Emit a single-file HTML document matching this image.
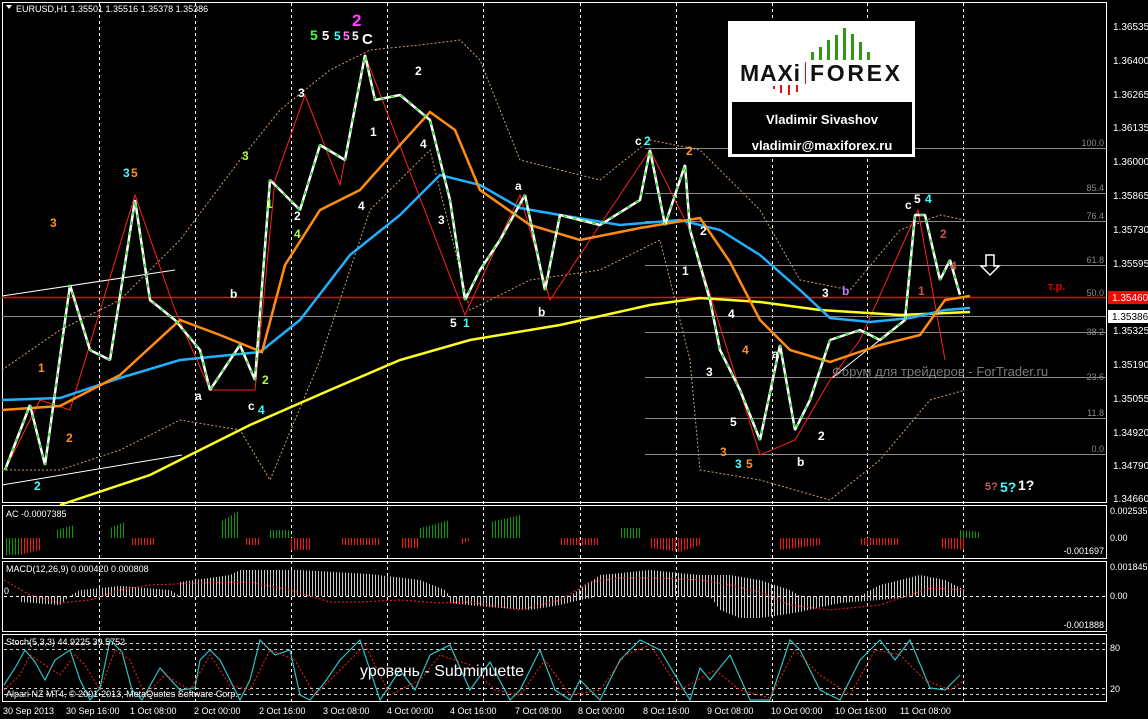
<!DOCTYPE html>
<html><head><meta charset="utf-8"><style>
html,body{margin:0;padding:0;background:#000;width:1148px;height:719px;overflow:hidden}
svg{display:block;font-family:"Liberation Sans",sans-serif}
</style></head><body>
<svg width="1148" height="719" viewBox="0 0 1148 719" xmlns="http://www.w3.org/2000/svg">
<defs>
<pattern id="vb" width="3" height="4" patternUnits="userSpaceOnUse"><rect x="0" y="0" width="1" height="4" fill="#c8c8c8"/></pattern>
<pattern id="vg" width="3" height="4" patternUnits="userSpaceOnUse"><rect x="0" y="0" width="1" height="4" fill="#00a000"/></pattern>
<pattern id="vr" width="3" height="4" patternUnits="userSpaceOnUse"><rect x="0" y="0" width="1" height="4" fill="#ff1010"/></pattern>
</defs>
<rect width="1148" height="719" fill="#000"/>
<g fill="none" stroke="#fff" stroke-width="1">
<rect x="2.5" y="2.5" width="1104" height="500"/>
<rect x="2.5" y="505.5" width="1104" height="53"/>
<rect x="2.5" y="561.5" width="1104" height="70"/>
<rect x="2.5" y="634.5" width="1104" height="67"/>
</g>
<g stroke="#fff" stroke-dasharray="3,3" stroke-width="1">
<path d="M99.5 3V701M195.5 3V701M291.5 3V701M387.5 3V701M483.5 3V701M580.5 3V701M676.5 3V701M772.5 3V701M867.5 3V701M963.5 3V701"/>
</g>
<g stroke="#8a8a8a" stroke-width="1">
<path d="M645 148.5H1106M645 193.5H1106M645 221.5H1106M645 265.5H1106M645 332.5H1106M645 377.5H1106M645 418.5H1106M645 454.5H1106"/>
<path d="M2 316.5H1106"/>
</g>
<g fill="#8a8a8a" font-size="9" text-anchor="end">
<text x="1104" y="146">100.0</text><text x="1104" y="191">85.4</text><text x="1104" y="219">76.4</text><text x="1104" y="263">61.8</text><text x="1104" y="296">50.0</text><text x="1104" y="335">38.2</text><text x="1104" y="380">23.6</text><text x="1104" y="416">11.8</text><text x="1104" y="452">0.0</text>
</g>
<path d="M2 297.5H1106" stroke="#ff0000" stroke-width="1.5"/>
<text x="1048" y="290" fill="#e00000" font-size="11" font-weight="bold">т.р.</text>
<g fill="none" stroke="#c8a070" stroke-width="1" stroke-dasharray="2,2">
<path d="M2 370 L60 330 L120 300 L180 240 L240 160 L280 110 L330 70 L370 50 L420 45 L460 40 L480 60 L520 160 L600 180 L650 140 L700 150 L760 210 L800 280 L850 290 L900 230 L940 215 L965 220"/>
<path d="M2 470 L60 470 L120 450 L180 420 L240 430 L270 480 L320 360 L370 210 L430 150 L470 310 L530 280 L600 270 L660 240 L690 360 L700 470 L760 480 L830 500 L880 460 L930 400 L965 390"/>
</g>
<g stroke="#fff" stroke-width="1">
<path d="M2 296 L175 270M2 485 L182 455M832 378 L905 320"/>
</g>
<g fill="none" stroke="#ff2020" stroke-width="1">
<path d="M5 470 L40 400 L70 410 L135 195 L175 310 L210 390 L255 390 L275 180 L305 95 L340 185 L365 55 L465 315 L520 195 L550 300 L650 150 L690 230 L760 455 L795 440 L830 380 L860 340 L918 210 L945 360"/>
</g>
<g fill="none" stroke-width="2.5">
<path stroke="#ffff20" d="M60 505 L150 475 L250 425 L330 390 L400 360 L470 340 L560 325 L650 305 L700 298 L760 302 L820 310 L900 315 L970 312"/>
<path stroke="#20b0ff" d="M2 400 L60 398 L120 378 L180 360 L260 352 L300 320 L350 255 L400 215 L440 175 L480 185 L520 208 L560 215 L620 225 L680 220 L720 230 L760 255 L800 290 L830 318 L870 322 L910 318 L945 310 L970 308"/>
<path stroke="#ff8c10" d="M2 410 L60 406 L120 375 L180 320 L220 335 L262 352 L285 265 L320 210 L360 190 L400 145 L430 112 L455 130 L480 190 L530 225 L580 240 L640 228 L700 218 L730 262 L760 320 L790 350 L830 362 L880 345 L920 335 L945 300 L970 296"/>
</g>
<g fill="none" stroke-linejoin="bevel">
<path stroke="#fff" stroke-width="2.5" d="M5 470 L30 405 L45 465 L70 285 L90 350 L110 360 L135 200 L150 300 L175 320 L200 350 L210 390 L240 345 L255 380 L270 180 L300 210 L320 145 L345 160 L365 55 L375 100 L400 95 L430 120 L450 200 L465 300 L480 270 L500 240 L525 195 L545 290 L560 215 L600 225 L640 200 L650 150 L665 225 L685 165 L690 230 L710 300 L720 350 L740 390 L760 440 L780 345 L795 430 L810 400 L830 340 L860 330 L880 340 L905 320 L915 215 L925 215 L940 280 L950 260 L960 295"/>
<path stroke="#20e020" stroke-width="1.5" stroke-dasharray="4,6" d="M5 470 L30 405 L45 465 L70 285 L90 350 L110 360 L135 200 L150 300 L175 320 L200 350 L210 390 L240 345 L255 380 L270 180 L300 210 L320 145 L345 160 L365 55 L375 100 L400 95 L430 120 L450 200 L465 300 L480 270 L500 240 L525 195 L545 290 L560 215 L600 225 L640 200 L650 150 L665 225 L685 165 L690 230 L710 300 L720 350 L740 390 L760 440 L780 345 L795 430 L810 400 L830 340 L860 330 L880 340 L905 320 L915 215 L925 215 L940 280 L950 260 L960 295"/>
</g>
<g font-size="12" font-weight="bold">
<text x="310" y="40" fill="#40ff40" font-size="14">5</text><text x="322" y="40" fill="#fff" font-size="13">5</text><text x="334" y="40" fill="#40ffff">5</text><text x="343" y="40" fill="#ff80ff">5</text><text x="352" y="40" fill="#fff">5</text><text x="362" y="44" fill="#fff" font-size="15">C</text>
<text x="352" y="26" fill="#ff40ff" font-size="17">2</text>
<text x="123" y="177" fill="#40ffff">3</text><text x="131" y="177" fill="#ff9020">5</text>
<text x="50" y="227" fill="#ff9020">3</text><text x="242" y="160" fill="#aaff40">3</text>
<text x="298" y="97" fill="#fff">3</text><text x="415" y="75" fill="#fff">2</text>
<text x="635" y="145" fill="#fff">c</text><text x="644" y="145" fill="#40ffff">2</text>
<text x="686" y="155" fill="#ff9020">2</text><text x="515" y="190" fill="#fff">a</text>
<text x="450" y="327" fill="#fff">5</text><text x="463" y="327" fill="#40ffff">1</text>
<text x="538" y="316" fill="#fff">b</text><text x="230" y="298" fill="#fff">b</text>
<text x="248" y="410" fill="#fff">c</text><text x="258" y="414" fill="#40ffff">4</text>
<text x="195" y="400" fill="#fff">a</text>
<text x="905" y="209" fill="#fff">c</text><text x="914" y="203" fill="#fff">5</text><text x="925" y="203" fill="#40ffff">4</text>
<text x="940" y="238" fill="#d05050">2</text><text x="950" y="270" fill="#d05050">4</text><text x="918" y="295" fill="#d05050">1</text>
<text x="735" y="468" fill="#40ffff">3</text><text x="746" y="468" fill="#ff9020">5</text><text x="797" y="466" fill="#fff">b</text>
<text x="742" y="354" fill="#ff9020">4</text><text x="772" y="358" fill="#fff">a</text><text x="822" y="297" fill="#fff">3</text><text x="842" y="295" fill="#c080ff">b</text>
<text x="720" y="456" fill="#ff9020">3</text><text x="730" y="426" fill="#fff">5</text><text x="818" y="440" fill="#fff">2</text>
<text x="706" y="376" fill="#fff">3</text><text x="728" y="318" fill="#fff">4</text><text x="700" y="235" fill="#fff">2</text><text x="682" y="275" fill="#fff">1</text>
<text x="985" y="490" fill="#c06060" font-size="11">5?</text><text x="1000" y="492" fill="#40ffff" font-size="14">5?</text><text x="1018" y="490" fill="#fff" font-size="14">1?</text>
<text x="266" y="208" fill="#aaff40">1</text><text x="294" y="220" fill="#fff">2</text><text x="294" y="238" fill="#aaff40">4</text><text x="370" y="136" fill="#fff">1</text><text x="420" y="148" fill="#fff">4</text><text x="438" y="224" fill="#fff">3</text><text x="358" y="210" fill="#fff">4</text>
<text x="38" y="372" fill="#ff9020">1</text><text x="66" y="442" fill="#ff9020">2</text><text x="34" y="490" fill="#40ffff">2</text><text x="262" y="384" fill="#aaff40">2</text>
</g>
<text x="832" y="376" fill="#9a9a9a" font-size="13" opacity="0.8">Форум для трейдеров - ForTrader.ru</text>
<path d="M986 255 H994 V266 H999 L990 275 L981 266 H986 Z" fill="none" stroke="#fff" stroke-width="1.5"/>
<g fill="#fff" font-size="10">
<text x="1113" y="30">1.36535</text><text x="1113" y="64">1.36400</text><text x="1113" y="98">1.36265</text><text x="1113" y="131">1.36135</text><text x="1113" y="165">1.36000</text><text x="1113" y="199">1.35865</text><text x="1113" y="233">1.35730</text><text x="1113" y="267">1.35595</text><text x="1113" y="334">1.35325</text><text x="1113" y="368">1.35190</text><text x="1113" y="402">1.35055</text><text x="1113" y="436">1.34920</text><text x="1113" y="469">1.34790</text><text x="1113" y="502">1.34660</text>
</g>
<rect x="1108" y="291" width="40" height="13" fill="#ff0000"/><text x="1112" y="301" fill="#fff" font-size="10">1.35460</text>
<rect x="1108" y="310" width="40" height="13" fill="#fff"/><text x="1112" y="320" fill="#000" font-size="10">1.35386</text>
<g fill="#fff" font-size="9">
<text x="1110" y="514">0.002535</text><text x="1110" y="541">0.00</text><text x="1104" y="554" text-anchor="end">-0.001697</text>
<text x="1110" y="570">0.001845</text><text x="1110" y="599">0.00</text><text x="1104" y="628" text-anchor="end">-0.001888</text>
<text x="1110" y="651">80</text><text x="1110" y="692">20</text>
</g>
<path d="M6 5 L12 5 L9 9Z" fill="#fff"/>
<text x="16" y="12" fill="#fff" font-size="9">EURUSD,H1  1.35501 1.35516 1.35378 1.35386</text>
<rect x="728" y="21" width="187" height="136" fill="#fff"/>
<rect x="732" y="102" width="180" height="52" fill="#000"/>
<g fill="#2a9a10"><rect x="811" y="52" width="3" height="8"/><rect x="819" y="47" width="3" height="13"/><rect x="827" y="40" width="3" height="20"/><rect x="835" y="35" width="3" height="25"/><rect x="843" y="28" width="3" height="32"/><rect x="851" y="34" width="3" height="26"/><rect x="859" y="42" width="3" height="18"/><rect x="867" y="52" width="3" height="8"/></g>
<g fill="#e01010"><rect x="773" y="86" width="2" height="3"/><rect x="780" y="85" width="2" height="8"/><rect x="788" y="85" width="2" height="10"/><rect x="796" y="85" width="2" height="7"/></g>
<text x="740" y="81" fill="#111" font-size="23" font-weight="bold" textLength="60">MAXi</text>
<rect x="805" y="62" width="1" height="22" fill="#e01010"/>
<text x="810" y="81" fill="#111" font-size="23" font-weight="bold" textLength="90">FOREX</text>
<text x="822" y="124" fill="#fff" font-size="13" font-weight="bold" text-anchor="middle">Vladimir Sivashov</text>
<text x="822" y="150" fill="#fff" font-size="13" font-weight="bold" text-anchor="middle">vladimir@maxiforex.ru</text>
<polygon fill="url(#vg)" points="5,538 5,555 20,555 20,538 55,538 55,530 75,525 75,538 110,538 110,528 125,522 125,538 220,538 220,522 240,510 240,538 270,538 270,530 290,530 290,538 420,538 420,528 450,520 450,538 490,538 490,522 520,515 520,538 620,538 620,528 640,528 640,538 960,538 960,530 980,532 980,538"/>
<polygon fill="url(#vr)" points="20,538 20,555 40,550 40,538 130,538 130,545 155,545 155,538 240,538 245,538 245,545 260,545 260,538 290,538 290,550 310,550 310,538 340,538 340,545 380,545 380,538 400,538 400,548 418,548 418,538 460,538 460,545 470,540 470,538 560,538 560,545 600,545 600,538 650,538 650,548 680,552 700,545 700,538 780,538 780,550 820,545 820,538 860,538 860,545 900,545 900,538 940,538 940,548 965,550 965,538"/>
<text x="6" y="517" fill="#fff" font-size="9">AC -0.0007385</text>
<path d="M4 596.5H1106" stroke="#fff" stroke-dasharray="3,3" stroke-width="1"/>
<polygon fill="url(#vb)" points="180,596 180,582 230,575 240,570 300,570 370,574 420,580 445,590 450,596"/>
<polygon fill="url(#vb)" points="20,596 20,602 60,605 70,596"/>
<polygon fill="url(#vb)" points="70,596 80,590 120,586 170,590 180,596"/>
<polygon fill="url(#vb)" points="448,596 448,603 500,608 530,610 560,605 580,600 600,596"/>
<polygon fill="url(#vb)" points="570,596 600,575 650,570 700,575 730,575 760,580 790,590 800,596"/>
<polygon fill="url(#vb)" points="710,596 720,610 740,618 760,618 800,612 840,603 880,600 900,598 920,596"/>
<polygon fill="url(#vb)" points="860,596 880,585 920,575 945,580 965,590 965,596"/>
<path fill="none" stroke="#ff2020" stroke-dasharray="2,2" d="M4 580 L30 595 L60 603 L90 600 L120 590 L150 585 L200 583 L250 582 L290 590 L330 602 L360 602 L400 600 L440 603 L470 602 L520 610 L560 600 L590 582 L620 578 L660 578 L700 580 L730 585 L760 592 L790 605 L830 610 L880 605 L930 588 L965 590"/>
<text x="6" y="572" fill="#fff" font-size="9">MACD(12,26,9) 0.000420 0.000808</text>
<text x="4" y="594" fill="#fff" font-size="9">0</text>
<path d="M4 643.5H1106M4 649.5H1106M4 688.5H1106M4 694.5H1106" stroke="#ccc" stroke-dasharray="3,3" stroke-width="1"/>
<path fill="none" stroke="#30c0c0" stroke-width="1.2" d="M4 685 L15 668 L25 650 L35 662 L45 680 L55 660 L70 650 L80 680 L90 700 L100 688 L110 640 L122 652 L132 690 L142 700 L160 668 L180 690 L195 688 L200 660 L210 650 L220 660 L240 700 L250 680 L260 640 L275 655 L290 650 L300 695 L310 700 L325 682 L340 660 L360 640 L380 700 L400 670 L415 690 L430 655 L450 645 L470 690 L490 662 L510 700 L520 690 L540 650 L555 690 L570 700 L580 680 L600 700 L620 660 L640 640 L660 650 L690 700 L700 668 L710 680 L730 655 L750 700 L770 700 L790 640 L800 650 L820 690 L840 700 L860 660 L880 640 L895 660 L910 640 L930 688 L945 690 L960 675"/>
<path fill="none" stroke="#ff2020" stroke-dasharray="2,2" d="M4 690 L20 675 L30 655 L45 665 L60 675 L75 655 L85 665 L100 690 L115 650 L130 660 L145 695 L165 675 L190 690 L210 655 L230 685 L250 690 L270 650 L295 660 L315 695 L340 670 L365 645 L390 695 L420 680 L440 655 L470 665 L495 690 L520 695 L545 660 L570 695 L600 690 L625 655 L650 645 L680 690 L715 670 L740 690 L770 698 L795 650 L820 675 L850 695 L875 650 L900 655 L925 680 L950 690 L965 680"/>
<text x="6" y="645" fill="#fff" font-size="9">Stoch(5,3,3) 44.9225 39.5752</text>
<text x="6" y="697" fill="#fff" font-size="9">Alpari NZ MT4, © 2001-2013, MetaQuotes Software Corp.</text>
<text x="360" y="676" fill="#fff" font-size="16">уровень - Subminuette</text>
<g fill="#fff" font-size="9">
<text x="3" y="714">30 Sep 2013</text><text x="66" y="714">30 Sep 16:00</text><text x="130" y="714">1 Oct 08:00</text><text x="194" y="714">2 Oct 00:00</text><text x="259" y="714">2 Oct 16:00</text><text x="323" y="714">3 Oct 08:00</text><text x="387" y="714">4 Oct 00:00</text><text x="450" y="714">4 Oct 16:00</text><text x="515" y="714">7 Oct 08:00</text><text x="578" y="714">8 Oct 00:00</text><text x="643" y="714">8 Oct 16:00</text><text x="707" y="714">9 Oct 08:00</text><text x="771" y="714">10 Oct 00:00</text><text x="835" y="714">10 Oct 16:00</text><text x="900" y="714">11 Oct 08:00</text>
</g>
</svg>
</body></html>
